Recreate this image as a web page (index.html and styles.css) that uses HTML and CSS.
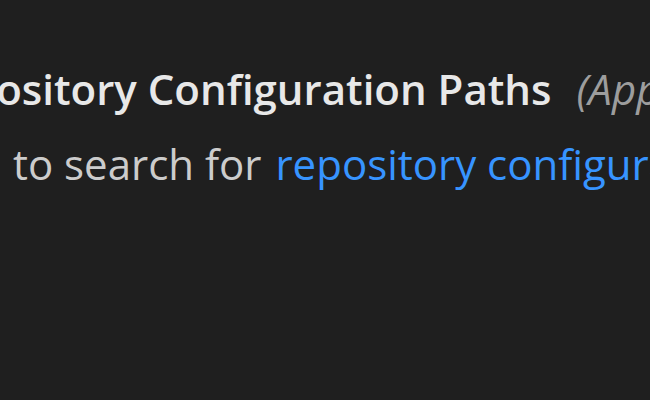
FILE: index.html
```html
<!DOCTYPE html>
<html lang="en">
<head>
    <meta charset="UTF-8">
    <title>Settings</title>
    <link rel="stylesheet" href="styles.css">
</head>
<body>
	<div class="setting-item">
	    <div class="setting-title">
		<span class="setting-label">Repository Configuration Paths</span>
		<span class="setting-scope">(Application)</span>
	    </div>
	    <div class="setting-desc">
		<span class="code-key">s</span> to search for <span class="setting-link">repository configuration</span> files.
	    </div>
	</div>
</body>
</html>
```
FILE: styles.css
```css
	html, body {
	    margin: 0;
	    height: 100%;
	    background-color: #1f1f1f;
	    overflow: hidden;
	}
	.setting-item {
	    font-family: "Open Sans", "Noto Sans", sans-serif;
	    font-size: 42px;
	    white-space: nowrap;
	    padding-top: 61px;
	}
	.setting-title {
	    height: 75px;
	    line-height: 56px;
	    margin-left: -81px; /* 视图向左滚动，标题开头被裁掉 */
	}
	.setting-label {
	    color: #e8e8e8;
	    font-weight: 600;
	}
	.setting-scope {
	    color: #9d9d9d;
	    font-style: italic;
	    margin-left: 14px;
	}
	.setting-desc {
	    color: #cccccc;
	    line-height: 56px;
	    margin-left: -24px;
	}
	.code-key {
	    color: #f14c4c;
	    margin-right: 6px;
	}
	.setting-link {
	    color: #3794ff;
	    margin-left: 3px;
	}
```
